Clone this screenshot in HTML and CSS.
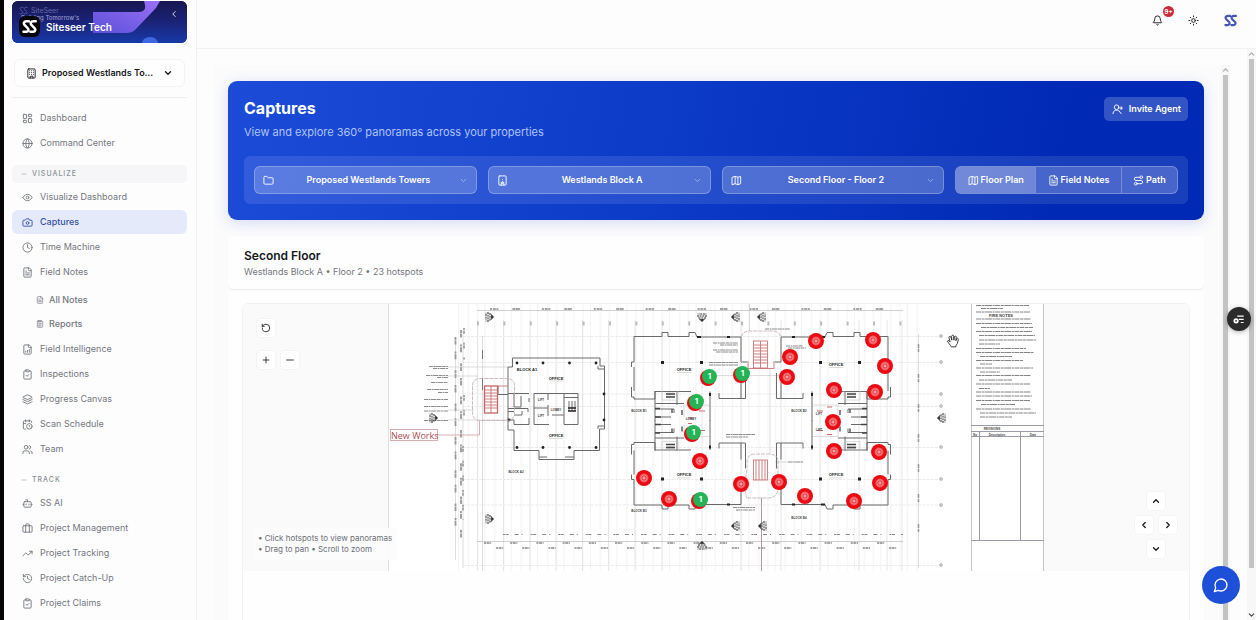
FILE: index.html
```html
<!DOCTYPE html>
<html lang="en">
<head>
<meta charset="utf-8">
<title>Captures - Siteseer Tech</title>
<meta name="viewport" content="width=device-width, initial-scale=1">
<link rel="stylesheet" href="styles.css">
</head>
<body>
<svg class="sprite" aria-hidden="true">
  <symbol id="i-dashboard" viewBox="0 0 24 24"><rect x="3" y="3" width="7" height="9" rx="1"/><rect x="14" y="3" width="7" height="5" rx="1"/><rect x="14" y="12" width="7" height="9" rx="1"/><rect x="3" y="16" width="7" height="5" rx="1"/></symbol>
  <symbol id="i-globe" viewBox="0 0 24 24"><circle cx="12" cy="12" r="10"/><path d="M12 2a14.5 14.5 0 0 0 0 20 14.5 14.5 0 0 0 0-20M2 12h20"/></symbol>
  <symbol id="i-eye" viewBox="0 0 24 24"><path d="M2 12s3.5-7 10-7 10 7 10 7-3.500 7-10 7-10-7-10-7"/><circle cx="12" cy="12" r="3"/></symbol>
  <symbol id="i-camera" viewBox="0 0 24 24"><path d="M14.500 4h-5L7 7H4a2 2 0 0 0-2 2v9a2 2 0 0 0 2 2h16a2 2 0 0 0 2-2V9a2 2 0 0 0-2-2h-3z"/><circle cx="12" cy="13" r="3"/></symbol>
  <symbol id="i-clock" viewBox="0 0 24 24"><circle cx="12" cy="12" r="10"/><path d="M12 6v6l4 2"/></symbol>
  <symbol id="i-file" viewBox="0 0 24 24"><path d="M15 2H6a2 2 0 0 0-2 2v16a2 2 0 0 0 2 2h12a2 2 0 0 0 2-2V7z"/><path d="M14 2v4a2 2 0 0 0 2 2h4M10 9H8M16 13H8M16 17H8"/></symbol>
  <symbol id="i-report" viewBox="0 0 24 24"><rect x="4" y="3" width="16" height="19" rx="2"/><path d="M8 2h8v4H8zM8 11h8M8 15h8M8 18h5"/></symbol>
  <symbol id="i-chartfile" viewBox="0 0 24 24"><path d="M15 2H6a2 2 0 0 0-2 2v16a2 2 0 0 0 2 2h12a2 2 0 0 0 2-2V7z"/><path d="M14 2v4a2 2 0 0 0 2 2h4M8 18v-2M12 18v-4M16 18v-6"/></symbol>
  <symbol id="i-clipcheck" viewBox="0 0 24 24"><rect x="8" y="2" width="8" height="4" rx="1"/><path d="M16 4h2a2 2 0 0 1 2 2v14a2 2 0 0 1-2 2H6a2 2 0 0 1-2-2V6a2 2 0 0 1 2-2h2M9 14l2 2 4-4"/></symbol>
  <symbol id="i-layers" viewBox="0 0 24 24"><path d="M12.800 2.200a2 2 0 0 0-1.700 0L2.600 6.100a1 1 0 0 0 0 1.800l8.600 3.900a2 2 0 0 0 1.700 0l8.600-3.900a1 1 0 0 0 0-1.800zM2 12l9.200 4.200a2 2 0 0 0 1.700 0L22 12M2 17l9.200 4.200a2 2 0 0 0 1.700 0L22 17"/></symbol>
  <symbol id="i-calendar" viewBox="0 0 24 24"><path d="M21 7.500V6a2 2 0 0 0-2-2H5a2 2 0 0 0-2 2v14a2 2 0 0 0 2 2h3.500M16 2v4M8 2v4M3 10h5"/><circle cx="16" cy="16" r="6"/><path d="M17.500 17.500L16 16.300V14"/></symbol>
  <symbol id="i-users" viewBox="0 0 24 24"><path d="M16 21v-2a4 4 0 0 0-4-4H6a4 4 0 0 0-4 4v2M22 21v-2a4 4 0 0 0-3-3.870M16 3.130a4 4 0 0 1 0 7.750"/><circle cx="9" cy="7" r="4"/></symbol>
  <symbol id="i-bot" viewBox="0 0 24 24"><path d="M12 8V4H8M2 14h2M20 14h2M15 13v2M9 13v2"/><rect x="4" y="8" width="16" height="12" rx="2"/></symbol>
  <symbol id="i-briefcase" viewBox="0 0 24 24"><rect x="2" y="6" width="20" height="14" rx="2"/><path d="M16 20V4a2 2 0 0 0-2-2h-4a2 2 0 0 0-2 2v16"/></symbol>
  <symbol id="i-trend" viewBox="0 0 24 24"><path d="M22 7l-8.500 8.500-5-5L2 17M16 7h6v6"/></symbol>
  <symbol id="i-history" viewBox="0 0 24 24"><path d="M3 12a9 9 0 1 0 9-9 9.750 9.750 0 0 0-6.740 2.740L3 8M3 3v5h5M12 7v5l4 2"/></symbol>
  <symbol id="i-reset" viewBox="0 0 24 24"><path d="M3 12a9 9 0 1 0 9-9 9.750 9.750 0 0 0-6.740 2.740L3 8M3 3v5h5"/></symbol>
  <symbol id="i-building" viewBox="0 0 24 24"><rect x="4" y="2" width="16" height="20" rx="2"/><path d="M9 22v-4h6v4M8 6h.01M16 6h.01M12 6h.01M12 10h.01M12 14h.01M16 10h.01M16 14h.01M8 10h.01M8 14h.01"/></symbol>
  <symbol id="i-block" viewBox="0 0 24 24"><rect x="4" y="2" width="16" height="20" rx="2"/><path d="M9 22v-4h6v4M9 16h6M12 10h.01M12 14h.01"/></symbol>
  <symbol id="i-folder" viewBox="0 0 24 24"><path d="M20 20a2 2 0 0 0 2-2V8a2 2 0 0 0-2-2h-7.900a2 2 0 0 1-1.690-.9L9.600 3.900A2 2 0 0 0 7.930 3H4a2 2 0 0 0-2 2v13a2 2 0 0 0 2 2z"/></symbol>
  <symbol id="i-map" viewBox="0 0 24 24"><path d="M3 5l6-2 6 2 6-2v16l-6 2-6-2-6 2zM9 3v16M15 5v16"/></symbol>
  <symbol id="i-route" viewBox="0 0 24 24"><circle cx="6" cy="19" r="3"/><path d="M9 19h8.500a3.500 3.500 0 0 0 0-7h-11a3.500 3.500 0 0 1 0-7H15"/><circle cx="18" cy="5" r="3"/></symbol>
  <symbol id="i-useradd" viewBox="0 0 24 24"><circle cx="10" cy="7" r="5"/><path d="M2 21a8 8 0 0 1 13.300-6M16 16l4 5M20 6v6M17 9h6"/></symbol>
  <symbol id="i-down" viewBox="0 0 24 24"><path d="M6 9l6 6 6-6"/></symbol>
  <symbol id="i-up" viewBox="0 0 24 24"><path d="M6 15l6-6 6 6"/></symbol>
  <symbol id="i-left" viewBox="0 0 24 24"><path d="M15 18l-6-6 6-6"/></symbol>
  <symbol id="i-right" viewBox="0 0 24 24"><path d="M9 18l6-6-6-6"/></symbol>
  <symbol id="i-plus" viewBox="0 0 24 24"><path d="M5 12h14M12 5v14"/></symbol>
  <symbol id="i-minus" viewBox="0 0 24 24"><path d="M4 12h16"/></symbol>
  <symbol id="i-bell" viewBox="0 0 24 24"><path d="M10.300 21a1.940 1.940 0 0 0 3.400 0M3.300 15.300A1 1 0 0 0 4 17h16a1 1 0 0 0 .74-1.670C19.400 13.960 18 12.500 18 8A6 6 0 0 0 6 8c0 4.500-1.400 5.960-2.700 7.300"/></symbol>
  <symbol id="i-sun" viewBox="0 0 24 24"><circle cx="12" cy="12" r="4"/><path d="M12 2v2M12 20v2M4.900 4.900l1.400 1.400M17.700 17.700l1.400 1.400M2 12h2M20 12h2M6.300 17.700l-1.400 1.400M19.100 4.900l-1.400 1.400"/></symbol>
  <symbol id="i-chat" viewBox="0 0 24 24"><path d="M7.900 20A9 9 0 1 0 4 16.100L2 22z"/></symbol>
  <symbol id="logo" viewBox="0 0 24 24"><path d="M11 3.500H7C3 3.500 2 7 4 9.500L9 14.500C11.500 17 10 20.500 7 20.500H2.500M22 3.500H18C14 3.500 13 7 15 9.500L20 14.500C22.500 17 21 20.500 18 20.500H13.500"/></symbol>
</svg>

<div class="app">
  <aside class="sidebar">
    <div class="banner">
      <svg class="banner-art" viewBox="0 0 175 42" preserveAspectRatio="none" aria-hidden="true">
        <defs>
          <linearGradient id="bg" x1="0" y1="0" x2="0" y2="1"><stop offset="0" stop-color="#171650"/><stop offset=".5" stop-color="#1b2378"/><stop offset="1" stop-color="#173aa8"/></linearGradient>
          <linearGradient id="arrow" x1="0" y1="1" x2="1" y2="0"><stop offset="0" stop-color="#5b50d8"/><stop offset="1" stop-color="#9a70f5"/></linearGradient>
        </defs>
        <rect width="175" height="42" fill="url(#bg)"/>
        <path d="M81 11H128Q134 10 133 4L132 0H148L144 7L123 29Q120 32 116 32H81Z" fill="url(#arrow)"/>
        <ellipse cx="138" cy="42" rx="8" ry="6" fill="#3e68e0"/>
      </svg>
      <div class="banner-ghost"><svg class="icon ghost-logo"><use href="#logo"/></svg><span>SiteSeer</span></div>
      <div class="banner-tag">Building Tomorrow's</div>
      <div class="brand"><span class="brand-mark"><svg class="icon"><use href="#logo"/></svg></span><strong>Siteseer Tech</strong></div>
      <button class="collapse" aria-label="Collapse sidebar"><svg class="icon"><use href="#i-left"/></svg></button>
    </div>

    <div class="project">
      <svg class="icon"><use href="#i-building"/></svg>
      <select aria-label="Project"><option>Proposed Westlands Towers</option></select>
      <svg class="icon chev"><use href="#i-down"/></svg>
    </div>

    <nav class="nav">
      <a href="#"><svg class="icon"><use href="#i-dashboard"/></svg>Dashboard</a>
      <a href="#"><svg class="icon"><use href="#i-globe"/></svg>Command Center</a>
      <button class="section shaded"><svg class="icon"><use href="#i-minus"/></svg>VISUALIZE</button>
      <a href="#"><svg class="icon"><use href="#i-eye"/></svg>Visualize Dashboard</a>
      <a href="#" class="active" aria-current="page"><svg class="icon"><use href="#i-camera"/></svg>Captures</a>
      <a href="#"><svg class="icon"><use href="#i-clock"/></svg>Time Machine</a>
      <a href="#"><svg class="icon"><use href="#i-file"/></svg>Field Notes</a>
      <div class="subnav">
        <a href="#"><svg class="icon"><use href="#i-file"/></svg>All Notes</a>
        <a href="#"><svg class="icon"><use href="#i-report"/></svg>Reports</a>
      </div>
      <a href="#"><svg class="icon"><use href="#i-chartfile"/></svg>Field Intelligence</a>
      <a href="#"><svg class="icon"><use href="#i-clipcheck"/></svg>Inspections</a>
      <a href="#"><svg class="icon"><use href="#i-layers"/></svg>Progress Canvas</a>
      <a href="#"><svg class="icon"><use href="#i-calendar"/></svg>Scan Schedule</a>
      <a href="#"><svg class="icon"><use href="#i-users"/></svg>Team</a>
      <button class="section"><svg class="icon"><use href="#i-minus"/></svg>TRACK</button>
      <a href="#"><svg class="icon"><use href="#i-bot"/></svg>SS AI</a>
      <a href="#"><svg class="icon"><use href="#i-briefcase"/></svg>Project Management</a>
      <a href="#"><svg class="icon"><use href="#i-trend"/></svg>Project Tracking</a>
      <a href="#"><svg class="icon"><use href="#i-history"/></svg>Project Catch-Up</a>
      <a href="#"><svg class="icon"><use href="#i-clipcheck"/></svg>Project Claims</a>
    </nav>
  </aside>

  <div class="workspace">
    <header class="topbar">
      <button class="bell" aria-label="Notifications"><svg class="icon"><use href="#i-bell"/></svg><span class="badge">9+</span></button>
      <button aria-label="Theme"><svg class="icon"><use href="#i-sun"/></svg></button>
      <a href="#" class="home" aria-label="Home"><svg class="icon"><use href="#logo"/></svg></a>
    </header>

    <div class="scroll-outer">
      <div class="scroll-inner">
        <main class="content">
          <section class="hero">
            <div class="hero-head">
              <div><h1>Captures</h1><p>View and explore 360° panoramas across your properties</p></div>
              <button class="invite"><svg class="icon"><use href="#i-useradd"/></svg>Invite Agent</button>
            </div>
            <div class="filters">
              <div class="picker"><svg class="icon"><use href="#i-folder"/></svg><select aria-label="Property"><option>Proposed Westlands Towers</option></select><svg class="icon chev"><use href="#i-down"/></svg></div>
              <div class="picker"><svg class="icon"><use href="#i-block"/></svg><select aria-label="Block"><option>Westlands Block A</option></select><svg class="icon chev"><use href="#i-down"/></svg></div>
              <div class="picker"><svg class="icon"><use href="#i-map"/></svg><select aria-label="Floor"><option>Second Floor - Floor 2</option></select><svg class="icon chev"><use href="#i-down"/></svg></div>
              <div class="segments">
                <button class="on"><svg class="icon"><use href="#i-map"/></svg>Floor Plan</button>
                <button><svg class="icon"><use href="#i-file"/></svg>Field Notes</button>
                <button><svg class="icon"><use href="#i-route"/></svg>Path</button>
              </div>
            </div>
          </section>

          <section class="floor-head">
            <h2>Second Floor</h2>
            <p>Westlands Block A • Floor 2 • 23 hotspots</p>
          </section>

          <section class="viewer">
            <div class="frame">
              <div class="stage">
                <div class="plan">
                  <svg class="drawing" viewBox="388 304 656 267" role="img" aria-label="Second floor plan">
                    <defs>
                      <pattern id="fine" x="455" width="26.4" height="20" patternUnits="userSpaceOnUse"><path d="M3.500 0V20M13.500 0V20M22.500 0V20" stroke="#f3f3f3" stroke-width="1"/></pattern>
                      <g id="wing">
                        <path d="M634 336.500H662V332.500H668V336.500H689V332.500H695L697 337H741V362H747M634 336.500V362H631.500V367M631.500 387V397H634V399H655V391M719 393V398.500H741M745.500 373V398.500H741V382M655 391V421M655 391.500H691M710 391.500V421M677 391V405M655 403.500H684M655 409H674V413M655 417H671" class="wall"/>
                        <path d="M634 367V391" class="wall"/>
                        <path d="M662 391V400H678V391M666 393H675M666 395H675M666 397H675M684 405H709M684 405V417" class="thin"/>
                        <path d="M655 408.500h5M682 410v5M655 417h6M672 409v4M666 394h9M666 397h9" stroke="#444" stroke-width="1.300"/>
                        <path d="M697 337h4M727 337h3M710 393v3" stroke="#222" stroke-width="2"/>
                        <rect x="661" y="361" width="3" height="3" fill="#222"/><rect x="700" y="361" width="3" height="3" fill="#222"/>
                        <path d="M690 407h5M699 411h6M688 418h4" stroke="#cf6a6a" stroke-width="1"/>
                      </g>
                      <g id="section"><path d="M-2 -3V3M0 -5V5M2 -4v8" stroke="#333" stroke-dasharray="2 .7"/><path d="M3 -3L6 0L3 3Z"/><path d="M-3 -4Q4 -4 4 0T-3 4" fill="none" stroke="#777" stroke-width=".6"/></g>
                    </defs>
                    <rect x="388" y="304" width="656" height="267" fill="#fff"/>
                    <rect x="455" y="304" width="464" height="267" fill="url(#fine)"/>
                    <path d="M477.500 320V571M503.500 320V571M530 320V571M556 320V571M582.500 320V571M608.500 320V571M635 320V571M662 320V571M702 320V571M741 320V571M781 320V571M820 320V571M859 320V571M887 320V571M902 320V571" class="grid"/>
                    <path d="M463 336.500H940M463 362.500H940M463 394H940M463 406.500H940M463 447.500H940M463 479.500H940M463 505H940M463 565.500H940" class="grid rows"/>
                    <path d="M388.500 304V571" stroke="#e0e0e0"/>

                    <path d="M477 310.500H903M477 541.500H903" stroke="#bbb" stroke-width=".7"/>
                    <path d="M490 309H903" stroke="#888" stroke-width="1.500" stroke-dasharray="2 .8 3 .6 2 14 3 .5 4 22"/>
                    <path d="M496 548H903M484 543H903" stroke="#888" stroke-width="1.500" stroke-dasharray="2 .6 3 .6 1 19"/>
                    <path d="M503 534.500H903" stroke="#888" stroke-width="1.200" stroke-dasharray="2 .6 3 6 4 3 1 8"/>
                    <path d="M477 323.500H905" stroke="#bdbdbd" stroke-width="4" stroke-dasharray="2 24.400"/>
                    <path d="M455.500 337V560M463 330V568M482.500 336V571" class="thin"/>
                    <path d="M455.500 337V530M461 330V542" stroke="#999" stroke-width="1.800" stroke-dasharray="3 .6 4 7 2 .7 5 11"/>
                    <path d="M464 328V360M464 395V420M463 446V520" stroke="#aaa" stroke-width="2" stroke-dasharray="2 .7 3 9"/>
                    <path d="M482.500 350v9M482.500 378v12" stroke="#777"/>
                    <path d="M918.500 334V568" class="thin"/>
                    <path d="M918.500 344V540" stroke="#999" stroke-width="1.500" stroke-dasharray="4 1 3 22"/>
                    <g fill="#ccc" stroke="#aaa" stroke-width=".6"><circle cx="941" cy="336" r="1.500"/><circle cx="941" cy="362" r="1.500"/><circle cx="941" cy="394" r="1.500"/><circle cx="941" cy="406" r="1.500"/><circle cx="941" cy="447" r="1.500"/><circle cx="941" cy="479" r="1.500"/><circle cx="941" cy="505" r="1.500"/><circle cx="941" cy="565" r="1.500"/></g>

                    <g stroke="#8c8c8c" stroke-width="1" stroke-dasharray="4 .6 2 .5 5 .5">
                      <path d="M429 366.500H448M433 368.500H448M426 375.500H448M437 377.500H448M431 382.500H448M427 389.500H448M438 392.500H448M424 399.500H448M424 406.500H448M424 411H448M424 420.500H448"/>
                      <path d="M713 343H738M720 345H738M713 350H738M716 352H738M709 362.500H738M709 365H738M786 346H803M788 348H806M765 329H790"/>
                      <path d="M726 434.500H755M726 437H748M733 507.500H755M736 510H755M788 462H803"/>
                    </g>
                    <path d="M448 367H508M448 376H478M448 410H474M448 420H508M709 375.500H786M803 462H775" class="thin"/>

                    <path d="M512.500 367V358H600V366H604.500V429H599.500V450.500H574V459.500H539V450.500H514V430H508V367H512.500M598 366V369H604M598 429V426H604" class="wall"/>
                    <path d="M539 457H547M565 457H574M547 459.500H565" class="wall"/>
                    <path d="M508 393.500H529M498 386V394.500H508M514 394V407H521V396M529 398V402M508 408.500H528V412M508 411.500H514M508 420H514V424.500H529V418M514 415H522V411" class="wall"/>
                    <path d="M534 393.500H578V424.500H564V393.500M534 393.500V424.500H549M548 393.500V400M548 405V416M534 408H548M564 397.500H578M552 415H564M569 401v10M572 401v10M575 401v10" class="wall"/>
                    <path d="M568 408H576M568 411H576" stroke="#222" stroke-width="1.500"/>
                    <g fill="#222"><circle cx="517" cy="363" r="1.400"/><circle cx="543" cy="363" r="1.400"/><circle cx="569.500" cy="363" r="1.400"/><circle cx="596" cy="363" r="1.400"/><circle cx="517" cy="447.500" r="1.400"/><circle cx="543" cy="447.500" r="1.400"/><circle cx="569.500" cy="447.500" r="1.400"/><circle cx="596" cy="447.500" r="1.400"/><circle cx="604" cy="394" r="1.400"/><circle cx="604" cy="420" r="1.400"/><circle cx="509" cy="420" r="1.400"/></g>
                    <rect x="472.500" y="378.500" width="42" height="42" rx="7" class="cloud"/>
                    <g class="stair"><rect x="484.500" y="386" width="13" height="27" stroke-width="1.300"/><path d="M485 390h12M485 393h12M485 396h12M485 399h12M485 402h12M485 405h12M485 408h12M491 386v27M498 386H508"/></g>
                    <path d="M437 435H479.500V421" class="leader"/>
                    <rect x="390.500" y="429.500" width="47" height="11" fill="#fff" class="leader"/>
                    <text x="391" y="439" class="newworks">New Works</text>

                    <use href="#wing"/>
                    <use href="#wing" transform="translate(1522 0) scale(-1 1)"/>
                    <use href="#wing" transform="translate(0 841.500) scale(1 -1)"/>
                    <use href="#wing" transform="translate(1522 841.500) scale(-1 -1)"/>
                    <path d="M741 362V340Q741 331 750 331H772Q781 331 781 340V362M747 498Q743 488 747 470V460Q748 454 756 454H768Q777 454 778 460V490Q776 498 768 498Z" class="cloud"/>
                    <g class="stair"><rect x="753.500" y="341" width="14" height="27"/><path d="M754 345h13M754 348h13M754 351h13M754 354h13M754 357h13M754 360h13M754 363h13M760.500 341v27M748 361V368.500H774V361" /><rect x="753.500" y="460" width="14" height="20"/><path d="M756 460v20M759 460v20M762 460v20M765 460v20"/></g>
                    <path d="M749.500 304V331M770 369V454" class="thin"/>
                    <path d="M761.500 498V571" stroke="#b59a9a"/>

                    <g fill="#222">
                      <use href="#section" x="488" y="317"/><use href="#section" x="488" y="519"/><use href="#section" x="432" y="418"/>
                      <use href="#section" transform="translate(702 316) rotate(90)"/><use href="#section" transform="translate(702 547) rotate(-90)"/>
                      <use href="#section" transform="translate(737 317) rotate(180)"/><use href="#section" transform="translate(763 317) rotate(180)"/>
                      <use href="#section" transform="translate(737 526) rotate(180)"/><use href="#section" transform="translate(764 526) rotate(180)"/>
                      <use href="#section" transform="translate(943 418) rotate(180)"/>
                    </g>
                    <g class="room"><text x="556" y="380">OFFICE</text><text x="556" y="437">OFFICE</text><text x="684" y="371">OFFICE</text><text x="836" y="366">OFFICE</text><text x="684" y="476">OFFICE</text><text x="836" y="476">OFFICE</text></g>
                    <path d="M549 381H563M549 438.500H563M677 372.500H691M829 367.500H843M677 478H691M829 478H843" class="thin"/>
                    <g class="block"><text x="527" y="371" class="room">BLOCK A1</text><text x="516" y="473">BLOCK A2</text><text x="639" y="412">BLOCK B1</text><text x="799" y="412">BLOCK B2</text><text x="639" y="512">BLOCK B3</text><text x="799" y="519">BLOCK B4</text><text x="541" y="401">LIFT</text><text x="541" y="417">LIFT</text><text x="556" y="411">LOBBY</text><text x="691" y="420">LOBBY</text><text x="819" y="415">LIFT</text><text x="819" y="431">LIFT</text></g>

                    <path d="M971.500 304V571M1043.500 304V571" stroke="#c6c6c6"/>
                    <g stroke="#848484" stroke-width="1" stroke-dasharray="5 .6 3 .5 7 .6 2 .5">
                      <path d="M976 305.500H1029M981 308.500H1003M976 312H1030M976 319H1031M976 323.500H1032M981 327.500H1033M976 331.500H1032M979 335.500H1035M979 340H1036M979 344H1000M976 348.500H1026M976 352.500H1034M980 356.500H1012M976 360.500H1023M980 364H992M976 368H1033M980 372H1000M976 375.500H1031M979 380H1012M976 384H1030M979 388.500H990M976 392H1031M976 396H1032M976 400.500H1030M981 404.500H1015M976 409H1031M980 413H1036M980 417H1012"/>
                    </g>
                    <text x="1001" y="317" class="note-title">FIRE NOTES</text>
                    <path d="M971 425.500H1044M971 431.500H1044M971 436.500H1044M971 540.500H1044M979.500 432V540M1020.500 432V540" stroke="#9c9ca8" stroke-width="1"/>
                    <g class="block"><text x="992" y="430">REVISIONS</text><text x="997" y="435.500">Description</text><text x="1033" y="435.500">Date</text><text x="975" y="435.500">No</text></g>
                  </svg>

                  <button class="pin" style="left:428px;top:37px" aria-label="Hotspot"></button>
                  <button class="pin" style="left:485px;top:36px" aria-label="Hotspot"></button>
                  <button class="pin" style="left:402px;top:53px" aria-label="Hotspot"></button>
                  <button class="pin" style="left:399px;top:73px" aria-label="Hotspot"></button>
                  <button class="pin" style="left:497px;top:62px" aria-label="Hotspot"></button>
                  <button class="pin" style="left:446px;top:86px" aria-label="Hotspot"></button>
                  <button class="pin" style="left:487px;top:88px" aria-label="Hotspot"></button>
                  <button class="pin" style="left:445px;top:118px" aria-label="Hotspot"></button>
                  <button class="pin" style="left:446px;top:147px" aria-label="Hotspot"></button>
                  <button class="pin" style="left:491px;top:148px" aria-label="Hotspot"></button>
                  <button class="pin" style="left:492px;top:179px" aria-label="Hotspot"></button>
                  <button class="pin" style="left:466px;top:197px" aria-label="Hotspot"></button>
                  <button class="pin" style="left:417px;top:192px" aria-label="Hotspot"></button>
                  <button class="pin" style="left:391px;top:178px" aria-label="Hotspot"></button>
                  <button class="pin" style="left:353px;top:180px" aria-label="Hotspot"></button>
                  <button class="pin" style="left:312px;top:157px" aria-label="Hotspot"></button>
                  <button class="pin" style="left:256px;top:174px" aria-label="Hotspot"></button>
                  <button class="pin" style="left:281px;top:195px" aria-label="Hotspot"></button>
                  <button class="pin counted" style="left:320px;top:74px"><span>1</span></button>
                  <button class="pin counted" style="left:353px;top:71px"><span>1</span></button>
                  <button class="pin counted" style="left:307px;top:99px"><span>1</span></button>
                  <button class="pin counted" style="left:304px;top:130px"><span>1</span></button>
                  <button class="pin counted" style="left:311px;top:197px"><span>1</span></button>
                  <svg class="hand" viewBox="0 0 24 24" aria-hidden="true"><path d="M8 20L3 13.500Q2 11.500 4 11Q5.500 11 7 13.500L5 6Q5 4 6.500 4T8.500 6L10 10.500L9.500 4Q10 2 11.500 2T13 4L13.500 10.500L14.500 4.500Q15.500 3 16.500 3.500T17.500 5.500L17 11.500L18.500 8Q20 6.500 21 8Q21.500 9 20.500 12Q20 17 17 20V22H9Z"/></svg>
                </div>
                <div class="zoomers">
                  <button aria-label="Reset view"><svg class="icon"><use href="#i-reset"/></svg></button>
                  <div><button aria-label="Zoom in"><svg class="icon"><use href="#i-plus"/></svg></button><button aria-label="Zoom out"><svg class="icon"><use href="#i-minus"/></svg></button></div>
                </div>
                <div class="hints">• Click hotspots to view panoramas<br>• Drag to pan • Scroll to zoom</div>
                <div class="pan">
                  <button aria-label="Pan up"><svg class="icon"><use href="#i-up"/></svg></button>
                  <div><button aria-label="Pan left"><svg class="icon"><use href="#i-left"/></svg></button><button aria-label="Pan right"><svg class="icon"><use href="#i-right"/></svg></button></div>
                  <button aria-label="Pan down"><svg class="icon"><use href="#i-down"/></svg></button>
                </div>
              </div>
            </div>
          </section>
        </main>
        <div class="bar"><svg class="icon"><use href="#i-up"/></svg><i></i></div>
      </div>
      <div class="bar outer"><svg class="icon"><use href="#i-up"/></svg><i></i><svg class="icon dark"><use href="#i-down"/></svg></div>
    </div>
  </div>
</div>

<button class="side-tool" aria-label="Quick tools"><svg viewBox="0 0 24 24" aria-hidden="true"><path d="M9 7H20M12 12.500H20M15 18H20" stroke="#fff" stroke-width="2"/><circle cx="7" cy="15" r="4.500" fill="#fff"/><circle cx="7" cy="15" r="1.500" fill="#2b2b2b"/></svg></button>
<button class="chat" aria-label="Open chat"><svg class="icon"><use href="#i-chat"/></svg></button>
</body>
</html>
```
FILE: styles.css
```css
* { box-sizing: border-box; }

body {
  margin: 0;
  overflow: hidden;
  background: #fdfdfe;
  color: #16181d;
  font: 9px/12px Inter, "Liberation Sans", sans-serif;
}

button, select {
  margin: 0;
  padding: 0;
  border: 0;
  background: none;
  color: inherit;
  font: inherit;
}

select { appearance: none; min-width: 0; outline: 0; }
option { color: #16181d; }
a { color: inherit; text-decoration: none; }
h1, h2, p { margin: 0; }

.sprite { position: absolute; width: 0; height: 0; }

.icon {
  flex: none;
  width: 11px;
  height: 11px;
  fill: none;
  stroke: currentColor;
  stroke-width: 2;
  stroke-linecap: round;
  stroke-linejoin: round;
}

.app { display: flex; height: 100vh; border-left: 4px solid #050304; }

/* Sidebar */
.sidebar {
  flex: none;
  width: 193px;
  padding: 1px 9px 0 8px;
  border-right: 1px solid #f0f0f3;
  overflow: hidden;
}

.banner {
  position: relative;
  height: 42px;
  border-radius: 6px;
  overflow: hidden;
  background: #171650;
  color: #fff;
}

.banner-art { position: absolute; inset: 0; width: 100%; height: 100%; }
.banner-ghost { position: absolute; left: 7px; top: 5px; display: flex; align-items: center; gap: 3px; color: #6368ac; font-size: 7px; line-height: 8px; }
.ghost-logo { width: 9px; height: 9px; }
.banner-tag { position: absolute; left: 9px; top: 14px; color: #a6a9d8; font-size: 6px; line-height: 6px; white-space: nowrap; }
.brand { position: absolute; left: 7px; top: 15px; display: flex; align-items: center; gap: 6px; font-size: 10px; line-height: 10px; }
.brand strong { font-weight: 600; }
.brand-mark { display: grid; place-items: center; width: 21px; height: 21px; border-radius: 6px; background: #05050a; }
.brand-mark .icon { width: 15px; height: 15px; stroke-width: 4; }
.collapse { position: absolute; right: 8px; top: 8px; display: flex; }
.collapse .icon { width: 10px; height: 10px; }

.project {
  display: flex;
  align-items: center;
  gap: 5px;
  height: 28px;
  margin: 16px 2px 10px;
  padding: 0 11px;
  border: 1px solid #f3f3f5;
  border-radius: 6px;
  background: #fefefe;
  font-weight: 600;
}

.project select { flex: 1; overflow: hidden; text-overflow: ellipsis; white-space: nowrap; }
.project .chev { width: 10px; height: 10px; stroke-width: 3; }

.nav {
  display: flex;
  flex-direction: column;
  gap: 1px;
  padding-top: 8px;
  border-top: 1px solid #eeeef1;
  color: #75787f;
}

.nav a { display: flex; align-items: center; gap: 7px; flex: none; height: 24px; padding-left: 10px; border-radius: 6px; }
.nav .active { background: #e5eafa; color: #3550a8; font-weight: 500; }
.section { display: flex; align-items: center; gap: 5px; flex: none; height: 18px; margin: 9px 0 1px; padding-left: 9px; border-radius: 5px; color: #8b8e96; font-size: 7px; font-weight: 500; }
.section .icon { width: 6px; height: 6px; }
.section { letter-spacing: 1px; }
.shaded { background: #f6f6f9; }
.subnav { padding: 3px 0 0 14px; font-weight: 500; }
.subnav a { gap: 5px; }
.subnav .icon { width: 8px; height: 8px; }

/* Workspace */
.workspace { flex: 1; min-width: 0; display: flex; flex-direction: column; }
.topbar { display: flex; align-items: center; justify-content: flex-end; gap: 25px; flex: none; height: 49px; padding: 0 19px 8px 0; border-bottom: 1px solid #f1f1f4; }
.topbar button, .home { display: flex; }
.bell { position: relative; }
.home { color: #4355b5; }
.home .icon { width: 13px; height: 13px; stroke-width: 4; }
.topbar .badge { position: absolute; left: 11px; top: -9px; width: 11px; height: 11px; border-radius: 50%; background: #cc2936; color: #fff; font-size: 6px; font-weight: 700; line-height: 11px; text-align: center; }

.scroll-outer { display: flex; flex: 1; min-height: 0; padding-left: 16px; }
.scroll-inner { display: flex; flex: 1; min-width: 0; margin: 16px 17px 0 0; background: #fbfbfc; }
.bar { flex: none; display: flex; flex-direction: column; align-items: center; width: 9px; background: #f7f7f7; }
.bar i { flex: 1; width: 5px; background: #c3c3c3; }
.bar .icon { width: 9px; height: 10px; color: #aaa; stroke-width: 3; }
.outer .dark { margin-top: 42px; color: #444; }

.content { flex: 1; min-width: 0; overflow: hidden; padding: 16px 17px 0 15px; display: flex; flex-direction: column; }

.hero {
  flex: none;
  padding: 16px;
  border-radius: 9px;
  background: linear-gradient(100deg, #1c4bd8 0%, #0c3bc8 45%, #002ab6 85%);
  box-shadow: 0 3px 14px rgba(58, 90, 220, .2);
  color: #fff;
}

.hero-head { display: flex; justify-content: space-between; align-items: flex-start; }
.hero h1 { font-size: 16px; line-height: 22px; font-weight: 700; }
.hero p { margin: 6px 0 16px; color: #afc3f5; font-size: 11px; line-height: 15px; }
.invite { display: flex; align-items: center; gap: 6px; height: 24px; padding: 0 7px 0 8px; border-radius: 5px; background: rgba(255, 255, 255, .2); font-weight: 600; }

.filters { display: grid; grid-template-columns: repeat(4, minmax(0, 1fr)); gap: 11px; padding: 10px; border-radius: 6px; background: rgba(255, 255, 255, .1); font-weight: 600; }
.picker, .segments { display: flex; align-items: center; height: 28px; border: 1px solid rgba(255, 255, 255, .26); border-radius: 6px; background: rgba(255, 255, 255, .2); }
.picker { padding: 0 8px; }
.picker select { flex: 1; padding-left: 4px; text-align: center; text-align-last: center; }
.picker .chev { width: 9px; height: 9px; opacity: .55; }
.segments { overflow: hidden; }
.segments button { display: flex; align-items: center; justify-content: center; gap: 2px; flex: 1 1 auto; height: 100%; }
.segments button + button { border-left: 1px solid rgba(255, 255, 255, .26); }
.segments .on { background: rgba(255, 255, 255, .22); }

.floor-head { flex: none; margin-top: 16px; padding: 12px 16px 11px; border-bottom: 1px solid #ececef; border-radius: 6px; background: #fefefe; }
.floor-head h2 { font-size: 12px; line-height: 16px; font-weight: 600; }
.floor-head p { margin-top: 2px; color: #73767d; font-size: 9px; line-height: 12px; }

.viewer { flex: 1; min-height: 0; margin-top: 2px; padding: 11px 14px 0; background: #fefefe; }
.frame { height: 100%; border: 1px solid #f1f1f3; border-bottom: 0; border-radius: 6px 6px 0 0; }
.stage { position: relative; display: flex; justify-content: center; background: #fafafb; }
.plan { position: relative; width: 656px; }
.drawing { display: block; width: 656px; }

.wall { fill: none; stroke: #6a6a6a; stroke-width: 1; }
.thin { fill: none; stroke: #c6c6c6; stroke-width: .6; }
.grid { fill: none; stroke: #e6e6e6; stroke-width: 1; }
.rows { stroke: #ebebeb; stroke-dasharray: 3 1; }
.cloud { fill: none; stroke: #c4a8a8; stroke-width: .8; stroke-dasharray: 4 1; }
.stair { fill: none; stroke: #c46666; stroke-width: .8; }
.leader { stroke: #cf9c9c; stroke-width: .8; }
path.leader { fill: none; }
.newworks { fill: #ad4b50; font: 9px "Open Sans", sans-serif; }
.block { fill: #444; font: 700 3px "Liberation Sans", sans-serif; text-anchor: middle; }
.room { fill: #222; font: 700 4px "Liberation Sans", sans-serif; text-anchor: middle; }
.note-title { fill: #444; font: 700 4px "Liberation Sans", sans-serif; text-anchor: middle; }

.pin { position: absolute; width: 16px; height: 16px; margin: -8px 0 0 -8px; border-radius: 50%; background: radial-gradient(circle, #f6a0a0 0 1px, #e8323a 2px, #f48a8c 3px, #ea0a12 5px); }
.pin span { position: absolute; left: 2px; top: -1px; width: 15px; height: 15px; border-radius: 50%; background: #22b455; color: #fff; font-size: 8px; font-weight: 700; line-height: 15px; text-align: center; }
.hand { position: absolute; left: 558px; top: 30px; width: 14px; height: 14px; fill: #fff; stroke: #222; stroke-width: 1.5; stroke-linejoin: round; }

.zoomers { position: absolute; left: 13px; top: 14px; display: grid; gap: 12px; }
.zoomers div, .pan div { display: flex; gap: 4px; }
.zoomers button, .pan button { display: grid; place-items: center; width: 20px; height: 20px; border: 1px solid #f4f4f6; border-radius: 4px; background: #fff; }
.zoomers .icon { width: 10px; height: 10px; stroke-width: 2; }
.pan { position: absolute; right: 11px; bottom: 12px; display: grid; justify-items: center; gap: 4px; }
.pan .icon { width: 10px; height: 10px; stroke-width: 3; }
.hints { position: absolute; left: 10px; bottom: 11px; padding: 5px; border-radius: 4px; background: rgba(252, 252, 253, .9); color: #6c6f76; font-size: 8px; line-height: 11px; }

/* Floating buttons */
.side-tool { position: absolute; right: 5px; top: 307px; display: grid; place-items: center; width: 24px; height: 24px; border-radius: 50%; background: #2b2b2b; box-shadow: 0 1px 5px rgba(0, 0, 0, .3); }
.side-tool svg { width: 14px; height: 14px; }
.chat { position: absolute; right: 16px; bottom: 16px; display: grid; place-items: center; width: 38px; height: 38px; border-radius: 50%; background: #1d4fd8; color: #fff; }
.chat .icon { width: 16px; height: 16px; }
```
